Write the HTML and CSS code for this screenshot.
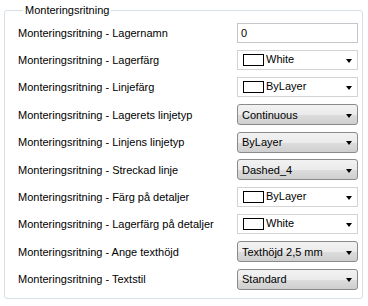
FILE: index.html
```html
<!DOCTYPE html>
<html lang="sv">
<head>
  <meta charset="UTF-8" />
  <title>Monteringsritning</title>
  <link rel="stylesheet" href="styles.css">
</head>
<body>
  <fieldset class="group">
    <legend>Monteringsritning</legend>

    <div class="row">
      <span class="label">Monteringsritning - Lagernamn</span>
      <div class="textbox">0</div>
    </div>

    <div class="row">
      <span class="label">Monteringsritning - Lagerfärg</span>
      <div class="combo flat"><span class="swatch"></span><span class="value">White</span><span class="arrow"></span></div>
    </div>

    <div class="row">
      <span class="label">Monteringsritning - Linjefärg</span>
      <div class="combo flat"><span class="swatch"></span><span class="value">ByLayer</span><span class="arrow"></span></div>
    </div>

    <div class="row">
      <span class="label">Monteringsritning - Lagerets linjetyp</span>
      <div class="combo list"><span class="value">Continuous</span><span class="arrow"></span></div>
    </div>

    <div class="row">
      <span class="label">Monteringsritning - Linjens linjetyp</span>
      <div class="combo list"><span class="value">ByLayer</span><span class="arrow"></span></div>
    </div>

    <div class="row">
      <span class="label">Monteringsritning - Streckad linje</span>
      <div class="combo list"><span class="value">Dashed_4</span><span class="arrow"></span></div>
    </div>

    <div class="row">
      <span class="label">Monteringsritning - Färg på detaljer</span>
      <div class="combo flat"><span class="swatch"></span><span class="value">ByLayer</span><span class="arrow"></span></div>
    </div>

    <div class="row">
      <span class="label">Monteringsritning - Lagerfärg på detaljer</span>
      <div class="combo flat"><span class="swatch"></span><span class="value">White</span><span class="arrow"></span></div>
    </div>

    <div class="row">
      <span class="label">Monteringsritning - Ange texthöjd</span>
      <div class="combo list"><span class="value">Texthöjd 2,5 mm</span><span class="arrow"></span></div>
    </div>

    <div class="row">
      <span class="label">Monteringsritning - Textstil</span>
      <div class="combo list"><span class="value">Standard</span><span class="arrow"></span></div>
    </div>
  </fieldset>
</body>
</html>
```

FILE: styles.css
```css
body {
  margin: 0;
  background-color: #ffffff;
  color: #000000;
  font-family: 'Liberation Sans', Arial, sans-serif;
  font-size: 11px;
}

.group {
  margin: 3px 5px 0 4px;
  padding: 2px 4px 6px 13px;
  height: 296px;
  box-sizing: border-box;
  border: 1px solid #d5dfe5;
  border-radius: 3px;
}

.group legend {
  margin-left: 5px;
  padding: 0 2px;
  line-height: 14px;
}

.row {
  display: grid;
  grid-template-columns: 1fr 121px;
  align-items: center;
  height: 27.4px;
}

.label {
  white-space: nowrap;
}

.textbox,
.combo {
  box-sizing: border-box;
  height: 20px;
  display: flex;
  align-items: center;
  white-space: nowrap;
}

.textbox {
  border: 1px solid #c3c6cb;
  padding-left: 3px;
}

.combo {
  position: relative;
  padding-left: 4px;
}

.combo.flat {
  border: 1px solid #d3d3d3;
  background-color: #ffffff;
  padding-left: 5px;
}

.combo.flat .value {
  margin-top: -2px;
}

.combo.list {
  height: 21px;
  border: 1px solid #8a8a8a;
  border-radius: 3px;
  background: linear-gradient(#f2f2f2 0%, #ebebeb 50%, #dddddd 51%, #cfcfcf 100%);
}

.swatch {
  width: 21px;
  height: 12px;
  box-sizing: border-box;
  border: 1px solid #000000;
  background-color: #ffffff;
  margin-right: 2px;
}

.arrow {
  position: absolute;
  right: 5px;
  top: 50%;
  margin-top: -1px;
  border-left: 3.5px solid transparent;
  border-right: 3.5px solid transparent;
  border-top: 4px solid #000000;
}
```
